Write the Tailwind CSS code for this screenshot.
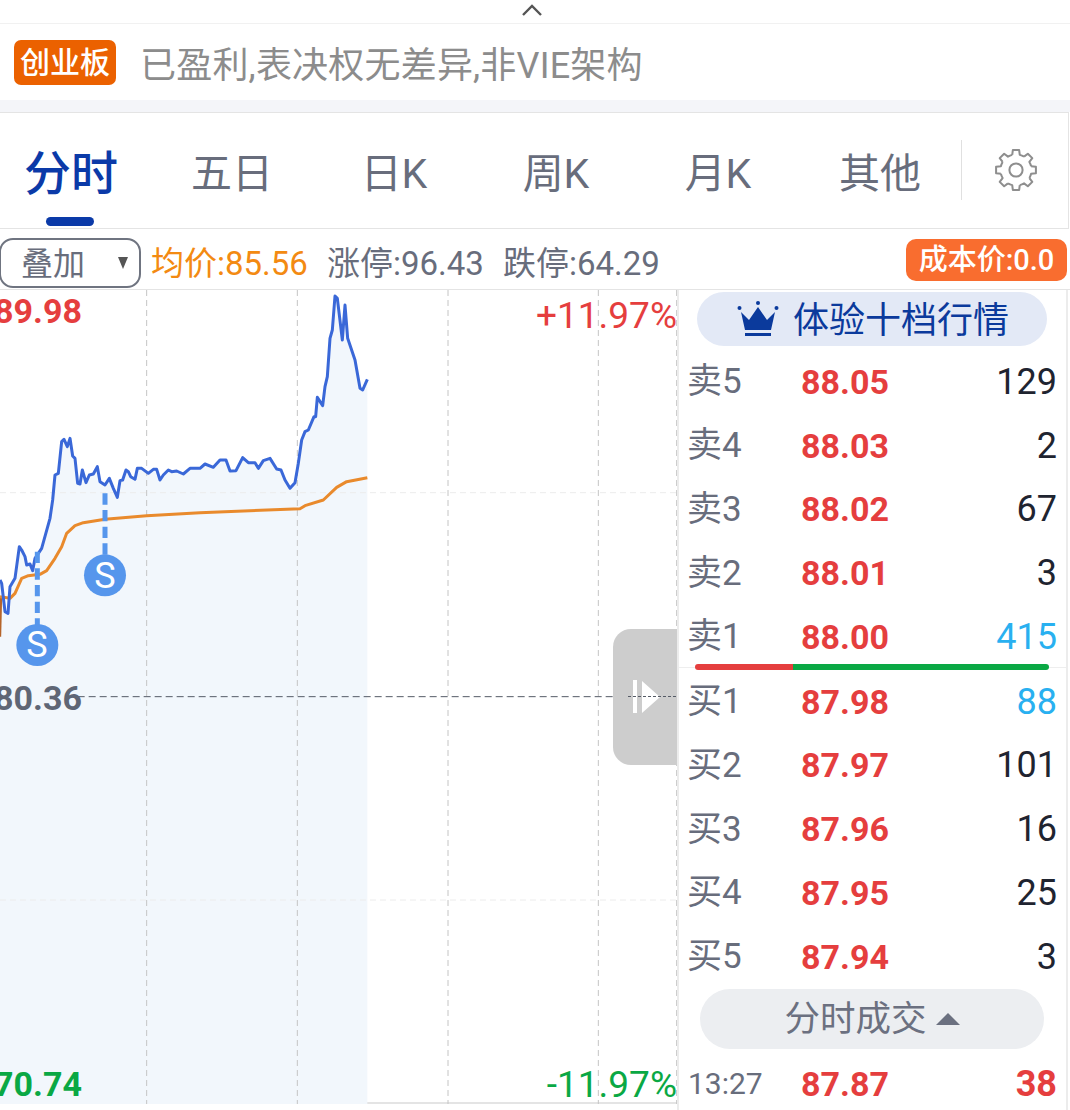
<!DOCTYPE html>
<html lang="zh">
<head>
    <meta charset="UTF-8">
    <title>分时</title>
    <script src="https://cdn.jsdelivr.net/npm/@tailwindcss/browser@4"></script>
</head>
<body class="bg-white">
<div class="relative w-[1070px] h-[1110px] overflow-hidden flex flex-col bg-white font-['Roboto','Noto_Sans_CJK_SC',sans-serif]">
    <!-- top handle -->
    <div class="h-6 shrink-0 border-b border-[#f1f1f1] flex justify-center">
        <svg class="ml-[-7px] mt-[4px]" width="22" height="12" viewBox="0 0 22 12" fill="none" stroke="#555" stroke-width="2.4"><path d="M2 11L11 2L20 11"/></svg>
    </div>
    <!-- notice -->
    <div class="h-[76px] shrink-0 flex items-center pl-[14px] gap-[24px]">
        <span class="w-[102px] h-[45px] rounded-[7px] bg-[#eb6100] text-white text-[30px] font-medium leading-[45px] text-center">创业板</span>
        <span class="mt-[8px] text-[36px] text-[#8c8c8c] tracking-[0.2px]">已盈利,表决权无差异,非VIE架构</span>
    </div>
    <div class="h-3 shrink-0 bg-[#f4f5f9]"></div>
    <!-- tabs -->
    <div class="h-[117px] shrink-0 w-[1069px] relative flex items-center pt-[8px] border-y border-r border-[#e4e4e4] text-[41px] text-[#686d7c]">
        <div class="w-[142px] mr-[9px] text-center text-[47px] font-medium text-[#0b3aa8]">分时</div>
        <div class="w-[162px] text-center">五日</div>
        <div class="w-[162px] text-center">日K</div>
        <div class="w-[162px] text-center">周K</div>
        <div class="w-[162px] text-center">月K</div>
        <div class="w-[162px] text-center">其他</div>
        <div class="w-px h-[60px] bg-[#e0e0e0] mt-[-10px]"></div>
        <svg class="ml-[32px] mt-[-10px]" width="44" height="44" viewBox="0 0 24 24" fill="none" stroke="#8e8e8e" stroke-width="1.1" stroke-linejoin="round">
            <path d="M9.94 3.75L10.28 1.14H13.72L14.06 3.75A8.5 8.5 0 0 1 16.38 4.71"/>
            <path transform="rotate(45 12 12)" d="M9.94 3.75L10.28 1.14H13.72L14.06 3.75A8.5 8.5 0 0 1 16.38 4.71"/>
            <path transform="rotate(90 12 12)" d="M9.94 3.75L10.28 1.14H13.72L14.06 3.75A8.5 8.5 0 0 1 16.38 4.71"/>
            <path transform="rotate(135 12 12)" d="M9.94 3.75L10.28 1.14H13.72L14.06 3.75A8.5 8.5 0 0 1 16.38 4.71"/>
            <path transform="rotate(180 12 12)" d="M9.94 3.75L10.28 1.14H13.72L14.06 3.75A8.5 8.5 0 0 1 16.38 4.71"/>
            <path transform="rotate(225 12 12)" d="M9.94 3.75L10.28 1.14H13.72L14.06 3.75A8.5 8.5 0 0 1 16.38 4.71"/>
            <path transform="rotate(270 12 12)" d="M9.94 3.75L10.28 1.14H13.72L14.06 3.75A8.5 8.5 0 0 1 16.38 4.71"/>
            <path transform="rotate(315 12 12)" d="M9.94 3.75L10.28 1.14H13.72L14.06 3.75A8.5 8.5 0 0 1 16.38 4.71"/>
            <circle cx="12" cy="12" r="3.6"/>
        </svg>
        <div class="absolute left-[46px] top-[104px] w-12 h-[9px] rounded-full bg-[#0b3aa8]"></div>
    </div>
    <!-- toolbar -->
    <div class="h-[61px] shrink-0 flex items-center text-[33px] text-[#686d7c] border-b border-[#e4e4e4]">
        <div class="w-[142px] h-[50px] ml-[-1px] mt-[7px] rounded-[14px] border-2 border-[#6f7480] flex items-center justify-between pl-[20px] pr-[11px]">
            <span class="mt-[3px] text-[32px]">叠加</span>
            <svg width="10" height="12" viewBox="0 0 10 12"><path d="M0 0H10L5 12Z" fill="#555"/></svg>
        </div>
        <span class="ml-[10px] mt-[10px] w-[176px] text-[#f38a12]">均价:85.56</span>
        <span class="mt-[10px] w-[176px]">涨停:96.43</span>
        <span class="mt-[10px] flex-1">跌停:64.29</span>
        <span class="w-[161px] h-[42px] mr-[3px] mt-[1px] rounded-[10px] bg-[#f96d2f] text-white text-[29px] font-medium leading-[42px] text-center">成本价:0.0</span>
    </div>
    <!-- main -->
    <div class="flex-1 flex min-h-0">
        <!-- chart -->
        <div class="relative w-[677px] h-[814px] shrink-0 border-b-2 border-[#e4e4e4] overflow-visible">
            <svg class="absolute left-0 top-0" width="678" height="814" viewBox="0 0 2034 2442" fill="none">
                <polygon fill="#f2f7fc" points="0,870 5,880 15,965 24,970 30,890 45,865 58,770 65,780 75,800 80,825 90,822 98,842 105,805 125,775 150,685 158,630 165,555 175,550 185,455 192,448 202,470 210,445 218,498 225,505 233,580 240,582 247,540 258,578 268,555 280,552 292,530 300,575 315,585 328,565 340,595 352,622 360,572 368,570 378,540 385,545 392,560 405,568 412,535 425,535 445,550 460,538 470,538 480,570 490,555 505,540 515,545 530,543 550,552 570,535 600,535 615,522 640,532 660,510 678,510 690,543 708,542 728,503 745,518 765,518 775,535 790,512 810,505 830,537 843,540 855,570 870,595 885,578 895,520 905,450 915,425 925,420 942,380 947,380 952,322 968,347 975,290 982,260 990,145 997,120 1005,18 1012,25 1027,150 1035,45 1043,145 1065,210 1080,295 1088,300 1102,268 1102,2442 0,2442"/>
                <g stroke="#c4c4c4" stroke-width="3" stroke-dasharray="18 12">
                    <path d="M440 0V2442M892 0V2442M1344 0V2442M1795 0V2442M2030 0V2442"/>
                </g>
                <g stroke="#ececec" stroke-width="3" stroke-dasharray="18 12">
                    <path d="M0 608H2034M0 1830H2034"/>
                </g>
                <path d="M200 1220H2034" stroke="#555b66" stroke-width="3" stroke-dasharray="21 12"/>
                <path d="M0 1040L3 920" stroke="#b5642a" stroke-width="7"/>
                <polyline stroke="#e98a2c" stroke-width="9" stroke-linejoin="round" points="0,920 30,925 45,910 65,865 85,857 120,853 140,842 165,805 185,770 200,730 225,707 250,698 315,688 440,677 600,668 900,656 915,647 970,630 1010,592 1040,575 1102,563"/>
                <polyline stroke="#3a68d8" stroke-width="9" stroke-linejoin="round" points="0,870 5,880 15,965 24,970 30,890 45,865 58,770 65,780 75,800 80,825 90,822 98,842 105,805 125,775 150,685 158,630 165,555 175,550 185,455 192,448 202,470 210,445 218,498 225,505 233,580 240,582 247,540 258,578 268,555 280,552 292,530 300,575 315,585 328,565 340,595 352,622 360,572 368,570 378,540 385,545 392,560 405,568 412,535 425,535 445,550 460,538 470,538 480,570 490,555 505,540 515,545 530,543 550,552 570,535 600,535 615,522 640,532 660,510 678,510 690,543 708,542 728,503 745,518 765,518 775,535 790,512 810,505 830,537 843,540 855,570 870,595 885,578 895,520 905,450 915,425 925,420 942,380 947,380 952,322 968,347 975,290 982,260 990,145 997,120 1005,18 1012,25 1027,150 1035,45 1043,145 1065,210 1080,295 1088,300 1102,268"/>
                <path d="M315 610V795" stroke="#5696ec" stroke-width="15" stroke-dasharray="34 16"/>
                <path d="M112 785V1005" stroke="#5696ec" stroke-width="15" stroke-dasharray="34 16"/>
                <circle cx="315" cy="856" r="63" fill="#5696ec"/>
                <circle cx="112" cy="1065" r="63" fill="#5696ec"/>
            </svg>
            <span class="absolute left-[84px] top-[262px] w-[42px] text-center text-[36px] leading-[48px] text-white">S</span>
            <span class="absolute left-[16px] top-[331px] w-[42px] text-center text-[36px] leading-[48px] text-white">S</span>
            <span class="absolute right-[595px] top-[0px] text-[34px] leading-[42px] font-bold text-[#e53e3e]">89.98</span>
            <span class="absolute right-[595px] top-[387px] text-[34px] leading-[42px] font-bold text-[#5f6675]">80.36</span>
            <span class="absolute right-[595px] top-[773px] text-[34px] leading-[42px] font-bold text-[#0aa844]">70.74</span>
            <span class="absolute right-0 top-[5px] text-[37px] leading-[42px] text-[#e53e3e]">+11.97%</span>
            <span class="absolute right-0 top-[774px] text-[37px] leading-[42px] text-[#0aa844]">-11.97%</span>
            <!-- collapse handle -->
            <div class="absolute left-[613px] top-[339px] w-16 h-[136px] rounded-l-[18px] bg-[#cdcdcd]">
                <svg class="absolute left-[20px] top-[51px]" width="28" height="34" viewBox="0 0 28 34" fill="#fff"><rect x="0" y="0" width="4" height="33"/><path d="M9 1L27 17L9 33Z"/></svg>
            </div>
            <div class="absolute left-[628px] top-[406px] w-[48px] border-t border-dashed border-[#555b66]"></div>
        </div>
        <!-- order book -->
        <div class="relative w-[391px] shrink-0 border-x-2 border-[#ececec] flex flex-col text-[34px] leading-none">
            <div class="h-[60px] shrink-0 pt-[2px] pl-[18px]">
                <div class="w-[350px] h-[54px] rounded-full bg-[#e3e9f6] flex items-center pl-[40px] gap-[14px] text-[36px] text-[#0b3a9c]">
                    <svg width="42" height="38" viewBox="0 0 42 38" fill="#0b3a9c"><circle cx="2.5" cy="8" r="2"/><circle cx="21" cy="3" r="2"/><circle cx="39.5" cy="8" r="2"/><path d="M4 12L12 20L21 7L30 20L38 12L34 30H8Z"/><rect x="8" y="33" width="26" height="3"/></svg>
                    <span class="mt-[3px]">体验十档行情</span>
                </div>
            </div>
            <div class="h-[63.75px] shrink-0 flex items-center pl-[8px] pr-[9px]"><span class="w-[114px] text-[35px] text-[#686d7c]">卖5</span><span class="font-bold text-[#e53e3e]">88.05</span><span class="flex-1 text-right text-[36px] text-[#1f2430]">129</span></div>
            <div class="h-[63.75px] shrink-0 flex items-center pl-[8px] pr-[9px]"><span class="w-[114px] text-[35px] text-[#686d7c]">卖4</span><span class="font-bold text-[#e53e3e]">88.03</span><span class="flex-1 text-right text-[36px] text-[#1f2430]">2</span></div>
            <div class="h-[63.75px] shrink-0 flex items-center pl-[8px] pr-[9px]"><span class="w-[114px] text-[35px] text-[#686d7c]">卖3</span><span class="font-bold text-[#e53e3e]">88.02</span><span class="flex-1 text-right text-[36px] text-[#1f2430]">67</span></div>
            <div class="h-[63.75px] shrink-0 flex items-center pl-[8px] pr-[9px]"><span class="w-[114px] text-[35px] text-[#686d7c]">卖2</span><span class="font-bold text-[#e53e3e]">88.01</span><span class="flex-1 text-right text-[36px] text-[#1f2430]">3</span></div>
            <div class="h-[63.75px] shrink-0 flex items-center pl-[8px] pr-[9px]"><span class="w-[114px] text-[35px] text-[#686d7c]">卖1</span><span class="font-bold text-[#e53e3e]">88.00</span><span class="flex-1 text-right text-[36px] text-[#29b0f0]">415</span></div>
            <!-- buy/sell ratio -->
            <div class="relative h-[1px] shrink-0 bg-[#eeeeee] mt-[-2px] mb-[2px]">
                <div class="absolute left-[16px] top-[-3px] w-[354px] h-[6px] rounded-full flex overflow-hidden"><div class="w-[98px] bg-[#e53e3e]"></div><div class="flex-1 bg-[#0aa844]"></div></div>
            </div>
            <div class="h-[63.75px] shrink-0 flex items-center pl-[8px] pr-[9px]"><span class="w-[114px] text-[35px] text-[#686d7c]">买1</span><span class="font-bold text-[#e53e3e]">87.98</span><span class="flex-1 text-right text-[36px] text-[#29b0f0]">88</span></div>
            <div class="h-[63.75px] shrink-0 flex items-center pl-[8px] pr-[9px]"><span class="w-[114px] text-[35px] text-[#686d7c]">买2</span><span class="font-bold text-[#e53e3e]">87.97</span><span class="flex-1 text-right text-[36px] text-[#1f2430]">101</span></div>
            <div class="h-[63.75px] shrink-0 flex items-center pl-[8px] pr-[9px]"><span class="w-[114px] text-[35px] text-[#686d7c]">买3</span><span class="font-bold text-[#e53e3e]">87.96</span><span class="flex-1 text-right text-[36px] text-[#1f2430]">16</span></div>
            <div class="h-[63.75px] shrink-0 flex items-center pl-[8px] pr-[9px]"><span class="w-[114px] text-[35px] text-[#686d7c]">买4</span><span class="font-bold text-[#e53e3e]">87.95</span><span class="flex-1 text-right text-[36px] text-[#1f2430]">25</span></div>
            <div class="h-[63.75px] shrink-0 flex items-center pl-[8px] pr-[9px]"><span class="w-[114px] text-[35px] text-[#686d7c]">买5</span><span class="font-bold text-[#e53e3e]">87.94</span><span class="flex-1 text-right text-[36px] text-[#1f2430]">3</span></div>
            <div class="h-[60px] shrink-0 ml-[21px] w-[344px] rounded-full bg-[#eceef1] flex items-center justify-center gap-[9px] text-[35.5px] text-[#6b7080]">
                <span class="mt-[3px]">分时成交</span>
                <svg width="24" height="12" viewBox="0 0 24 12"><path d="M12 0L24 12H0Z" fill="#6b7080"/></svg>
            </div>
            <div class="h-[70px] shrink-0 flex items-center pl-[9px] pr-[9px]"><span class="w-[113px] text-[30px] text-[#686d7c]">13:27</span><span class="font-bold text-[#e53e3e]">87.87</span><span class="flex-1 text-right text-[36px] font-bold text-[#e53e3e]">38</span></div>
        </div>
    </div>
</div>
</body>
</html>
